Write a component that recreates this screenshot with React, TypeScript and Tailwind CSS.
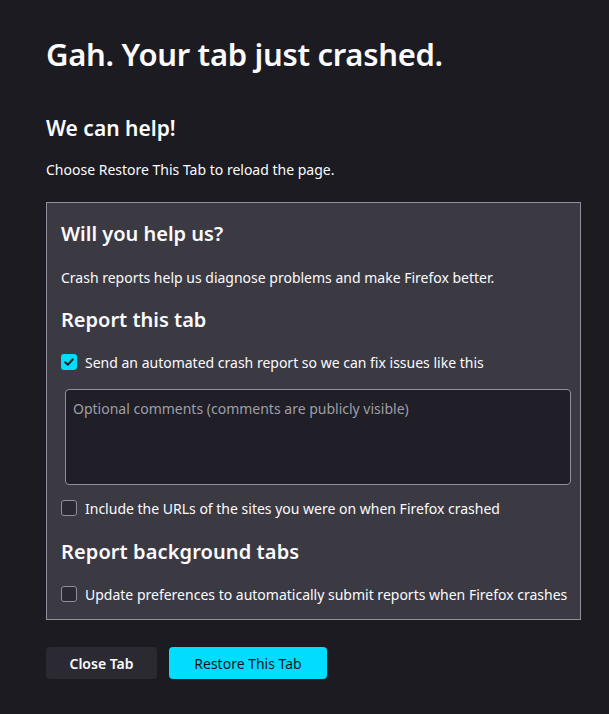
import React from "react";

function Check({ checked, label }: { checked?: boolean; label: string }) {
  return (
    <label className="flex items-center gap-2 h-5 whitespace-nowrap">
      {checked ? (
        <span className="w-4 h-4 shrink-0 rounded-[3px] bg-[#00ddff] flex items-center justify-center">
          <svg width="12" height="12" viewBox="0 0 12 12">
            <path d="M2.2 6.3 L4.8 8.8 L9.8 3.4" stroke="#1c1b22" strokeWidth="2" fill="none" strokeLinecap="round" strokeLinejoin="round" />
          </svg>
        </span>
      ) : (
        <span className="w-4 h-4 shrink-0 rounded-[3px] border border-[#8f8f9d] bg-[#2b2a33]" />
      )}
      <span>{label}</span>
    </label>
  );
}

export default function App() {
  return (
    <div
      className="min-h-screen bg-[#1c1b22] text-[#fbfbfe] pl-[46px] pr-[28px] pt-[33px] text-[15px]"
      style={{ fontFamily: '"Noto Sans", sans-serif' }}
    >
      <h1 className="text-[31px] font-semibold leading-[42px] tracking-[-0.3px]">Gah. Your tab just crashed.</h1>

      <h2 className="mt-[39px] text-[21px] font-semibold leading-[28px]">We can help!</h2>
      <p className="mt-[18px] leading-[20px] text-[14px]">Choose Restore This Tab to reload the page.</p>

      <div className="mt-[22px] border border-[#8f8f9d] bg-[#3b3a43] px-[14px] pt-[17px] pb-[15px] text-[14px]">
        <h3 className="text-[20px] font-semibold leading-[28px]">Will you help us?</h3>
        <p className="mt-[20px] leading-[20px]">Crash reports help us diagnose problems and make Firefox better.</p>
        <h3 className="mt-[18px] text-[20px] font-semibold leading-[28px]">Report this tab</h3>
        <div className="mt-[18px]">
          <Check checked label="Send an automated crash report so we can fix issues like this" />
        </div>
        <div className="mt-[17px] ml-[4px] mr-[-5px] h-[96px] rounded-[4px] border border-[#8f8f9d] bg-[#201f27] px-[7px] pt-[8px] text-[#9e9ea6]">
          Optional comments (comments are publicly visible)
        </div>
        <div className="mt-[13px]">
          <Check label="Include the URLs of the sites you were on when Firefox crashed" />
        </div>
        <h3 className="mt-[20px] text-[20px] font-semibold leading-[28px] tracking-[0.1px]">Report background tabs</h3>
        <div className="mt-[18px]">
          <Check label="Update preferences to automatically submit reports when Firefox crashes" />
        </div>
      </div>

      <div className="mt-[27px] flex gap-3 text-[14px]">
        <button className="w-[111px] h-[32px] rounded-[4px] bg-[#2b2a33] font-semibold text-[#fbfbfe]">Close Tab</button>
        <button className="w-[158px] h-[32px] rounded-[4px] bg-[#00ddff] text-[#15141a]">Restore This Tab</button>
      </div>
    </div>
  );
}
